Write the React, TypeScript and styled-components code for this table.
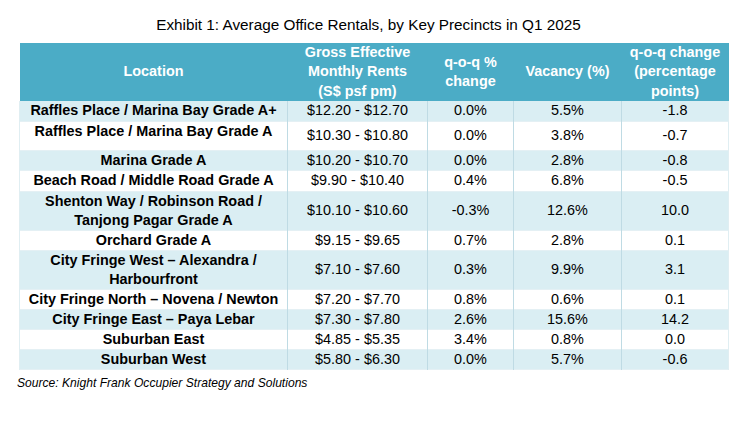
import React from "react";
import styled, { createGlobalStyle } from "styled-components";

interface RentRow {
  location: React.ReactNode;
  rent: string;
  qoq: string;
  vacancy: string;
  change: string;
  height: number;
}

const rows: RentRow[] = [
  { location: "Raffles Place / Marina Bay Grade A+", rent: "$12.20 - $12.70", qoq: "0.0%", vacancy: "5.5%", change: "-1.8", height: 20 },
  { location: "Raffles Place / Marina Bay Grade A", rent: "$10.30 - $10.80", qoq: "0.0%", vacancy: "3.8%", change: "-0.7", height: 29 },
  { location: "Marina Grade A", rent: "$10.20 - $10.70", qoq: "0.0%", vacancy: "2.8%", change: "-0.8", height: 19 },
  { location: "Beach Road / Middle Road Grade A", rent: "$9.90 - $10.40", qoq: "0.4%", vacancy: "6.8%", change: "-0.5", height: 21 },
  {
    location: (
      <>
        Shenton Way / Robinson Road /<br />
        Tanjong Pagar Grade A
      </>
    ),
    rent: "$10.10 - $10.60",
    qoq: "-0.3%",
    vacancy: "12.6%",
    change: "10.0",
    height: 38,
  },
  { location: "Orchard Grade A", rent: "$9.15 - $9.65", qoq: "0.7%", vacancy: "2.8%", change: "0.1", height: 20 },
  {
    location: (
      <>
        City Fringe West – Alexandra /<br />
        Harbourfront
      </>
    ),
    rent: "$7.10 - $7.60",
    qoq: "0.3%",
    vacancy: "9.9%",
    change: "3.1",
    height: 39,
  },
  { location: "City Fringe North – Novena / Newton", rent: "$7.20 - $7.70", qoq: "0.8%", vacancy: "0.6%", change: "0.1", height: 20 },
  { location: "City Fringe East – Paya Lebar", rent: "$7.30 - $7.80", qoq: "2.6%", vacancy: "15.6%", change: "14.2", height: 20 },
  { location: "Suburban East", rent: "$4.85 - $5.35", qoq: "3.4%", vacancy: "0.8%", change: "0.0", height: 19 },
  { location: "Suburban West", rent: "$5.80 - $6.30", qoq: "0.0%", vacancy: "5.7%", change: "-0.6", height: 20 },
];

const App = () => {
  return (
    <Page>
      <GlobalStyle />
      <Title>Exhibit 1: Average Office Rentals, by Key Precincts in Q1 2025</Title>
      <Table>
        <colgroup>
          <col style={{ width: 268 }} />
          <col style={{ width: 140 }} />
          <col style={{ width: 86 }} />
          <col style={{ width: 108 }} />
          <col style={{ width: 107 }} />
        </colgroup>
        <thead>
          <tr>
            <HeadCell>Location</HeadCell>
            <HeadCell>
              Gross Effective
              <br />
              Monthly Rents
              <br />
              (S$ psf pm)
            </HeadCell>
            <HeadCell>
              q-o-q %
              <br />
              change
            </HeadCell>
            <HeadCell>Vacancy (%)</HeadCell>
            <HeadCell>
              q-o-q change
              <br />
              (percentage
              <br />
              points)
            </HeadCell>
          </tr>
        </thead>
        <tbody>
          {rows.map((row, i) => (
            <BodyRow key={i} $shaded={i % 2 === 0} style={{ height: row.height }}>
              <LocationCell>{row.location}</LocationCell>
              <ValueCell>{row.rent}</ValueCell>
              <ValueCell>{row.qoq}</ValueCell>
              <ValueCell>{row.vacancy}</ValueCell>
              <ValueCell>{row.change}</ValueCell>
            </BodyRow>
          ))}
        </tbody>
      </Table>
      <Source>Source: Knight Frank Occupier Strategy and Solutions</Source>
    </Page>
  );
};

export default App;

const GlobalStyle = createGlobalStyle`
  html, body {
    margin: 0;
    padding: 0;
    background: #ffffff;
  }
  body {
    font-family: "Liberation Sans", Arial, sans-serif;
    color: #000000;
  }
`;

const Page = styled.div`
  width: 750px;
  height: 430px;
  box-sizing: border-box;
  padding: 16px 0 0 19px;
  display: flex;
  flex-direction: column;
`;

const Title = styled.div`
  width: 699px;
  text-align: center;
  font-size: 15.3px;
  line-height: 18px;
  margin-bottom: 9px;
`;

const Table = styled.table`
  width: 709px;
  border-collapse: collapse;
  table-layout: fixed;
  font-size: 14.4px;
  line-height: 19px;
`;

const HeadCell = styled.th`
  height: 58px;
  padding: 0;
  background: #4bacc6;
  color: #ffffff;
  font-weight: bold;
  text-align: center;
  vertical-align: middle;
  line-height: 19.3px;
`;

const BodyRow = styled.tr<{ $shaded: boolean }>`
  background: ${({ $shaded }) => ($shaded ? "#daeef3" : "#ffffff")};
  border-bottom: 1px solid #e4f0f4;

  & > td + td {
    border-left: 1px solid #bfdbe4;
  }
  & > td:first-child {
    border-left: 1px solid #e0eef2;
  }
  & > td:last-child {
    border-right: 1px solid #e0eef2;
  }
`;

const LocationCell = styled.td`
  padding: 0;
  font-weight: bold;
  text-align: center;
  vertical-align: top;
`;

const ValueCell = styled.td`
  padding: 0;
  text-align: center;
  vertical-align: middle;
`;

const Source = styled.div`
  margin: 6px 0 0 -2px;
  font-size: 12.1px;
  line-height: 15px;
  font-style: italic;
`;
